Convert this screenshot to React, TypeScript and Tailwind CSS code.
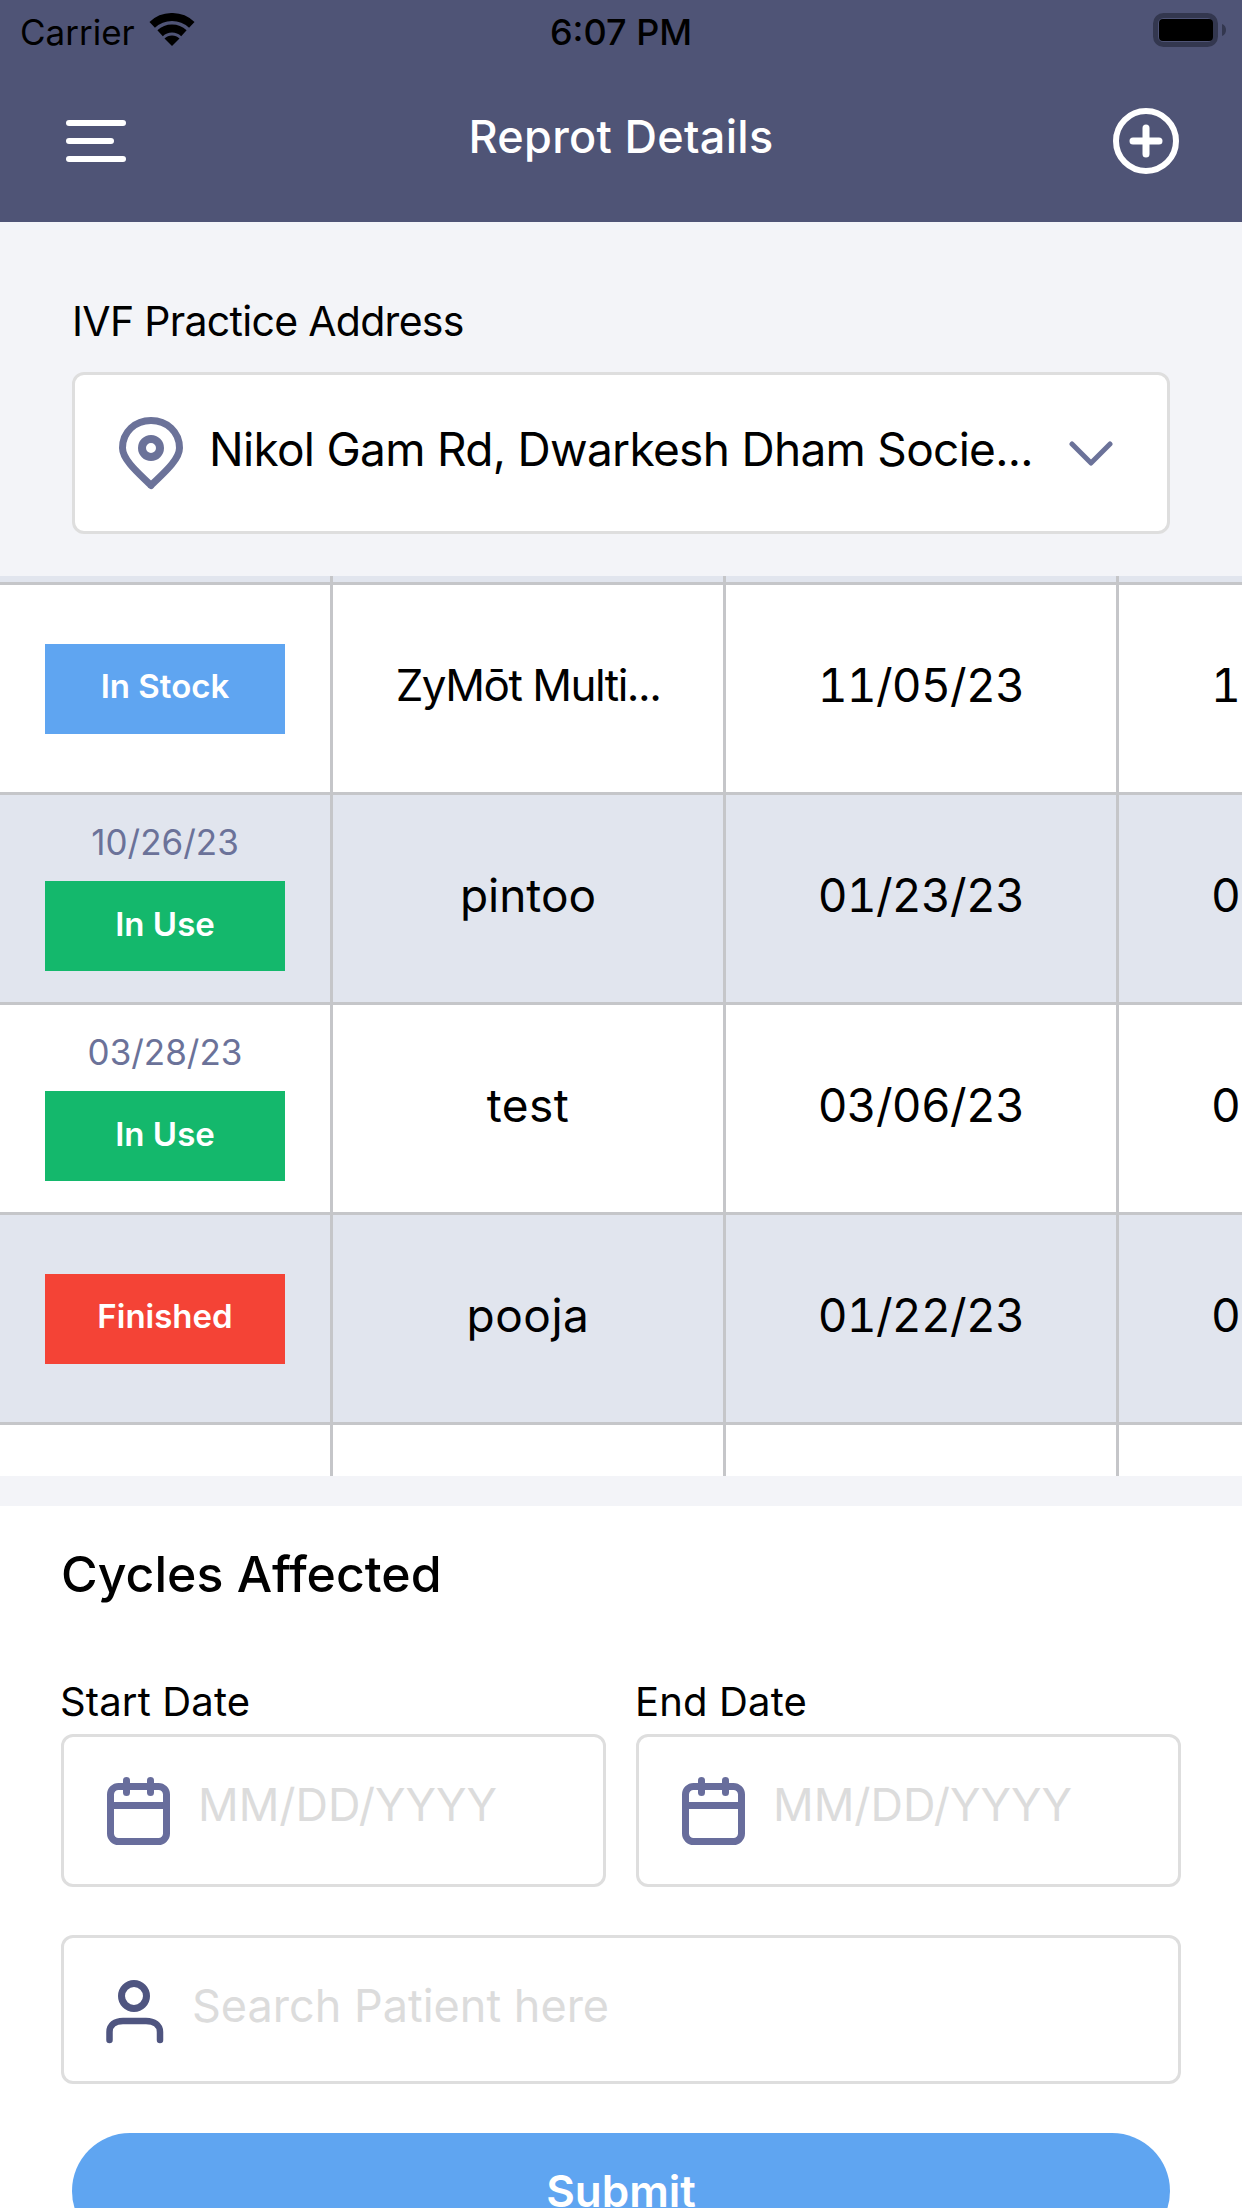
const F = "font-['Inter',sans-serif]";

function Wifi() {
  return (
    <svg width="46" height="34" viewBox="0 0 46 34" className="absolute left-[149px] top-[13px]">
      <path d="M3.200 11.800 A29 29 0 0 1 42.800 11.800" fill="none" stroke="#000" strokeWidth="8" />
      <path d="M11.100 20.200 A17.500 17.500 0 0 1 34.900 20.200" fill="none" stroke="#000" strokeWidth="8" />
      <path d="M23 33 L15.500 25.500 A10.600 10.600 0 0 1 30.500 25.500 Z" fill="#000" />
    </svg>
  );
}

function Battery() {
  return (
    <svg width="74" height="34" viewBox="0 0 74 34" className="absolute left-[1153px] top-[13px]">
      <rect x="2.500" y="2.500" width="60" height="29" rx="8" fill="none" stroke="#33374f" strokeWidth="5" />
      <rect x="6" y="6" width="54" height="22" rx="4" fill="#000" />
      <path d="M69 11 v12 c3 -1 4 -3.500 4 -6 s-1 -5 -4 -6z" fill="#33374f" />
    </svg>
  );
}

function Pin() {
  return (
    <svg width="64" height="73" viewBox="0 0 64 73" className="shrink-0">
      <path d="M32 68.500 C24 60 3.500 44 3.500 31 C3.500 15 16 3.500 32 3.500 C48 3.500 60.500 15 60.500 31 C60.500 44 40 60 32 68.500 Z" fill="none" stroke="#6b7299" strokeWidth="7" strokeLinejoin="round" />
      <circle cx="32" cy="31" r="9" fill="none" stroke="#6b7299" strokeWidth="8" />
    </svg>
  );
}

function Calendar() {
  return (
    <svg width="63" height="68" viewBox="0 0 63 68" className="shrink-0">
      <rect x="3.500" y="9.500" width="56" height="55" rx="8" fill="none" stroke="#686d9c" strokeWidth="7" />
      <rect x="3" y="25" width="57" height="7" fill="#686d9c" />
      <rect x="16" y="0" width="7" height="19" rx="3.500" fill="#686d9c" />
      <rect x="40" y="0" width="7" height="19" rx="3.500" fill="#686d9c" />
    </svg>
  );
}

function Person() {
  return (
    <svg width="58" height="64" viewBox="0 0 58 64" className="mt-[5px] shrink-0">
      <circle cx="28" cy="16" r="12.500" fill="none" stroke="#4f5580" strokeWidth="7" />
      <path d="M3.500 60 V52 C3.500 45 9 41 17 41 H40 C48 41 54 45 54 52 V60" fill="none" stroke="#4f5580" strokeWidth="6.500" strokeLinecap="round" />
    </svg>
  );
}

type Row = { date?: string; badge: string; color: string; name: string; nameClass: string; d1: string; d2: string; alt: boolean };
const rows: Row[] = [
  { badge: "In Stock", color: "bg-[#5fa5f1]", name: "ZyMōt Multi...", nameClass: "text-[44px] tracking-[-1.500px]", d1: "11/05/23", d2: "11/05/23", alt: false },
  { date: "10/26/23", badge: "In Use", color: "bg-[#14b86c]", name: "pintoo", nameClass: "text-[46px]", d1: "01/23/23", d2: "02/23/23", alt: true },
  { date: "03/28/23", badge: "In Use", color: "bg-[#14b86c]", name: "test", nameClass: "text-[46px] tracking-[0.500px]", d1: "03/06/23", d2: "03/23/23", alt: false },
  { badge: "Finished", color: "bg-[#f44336]", name: "pooja", nameClass: "text-[46px] tracking-[0.500px]", d1: "01/22/23", d2: "01/23/23", alt: true },
];

function Cell({ children, wide }: { children?: React.ReactNode; wide?: boolean }) {
  return (
    <div className={`flex shrink-0 flex-col items-center justify-center border-r-[3px] border-[#c5c6c9] ${wide ? "w-[333px]" : "w-[393px]"}`}>
      {children}
    </div>
  );
}

function TableRow({ r }: { r: Row }) {
  return (
    <div className={`flex h-[210px] border-b-[3px] border-[#c5c6c9] ${r.alt ? "bg-[#e1e5ee]" : "bg-white"}`}>
      <Cell wide>
        <div className="flex w-[240px] flex-col items-center">
          {r.date && (
            <div className="mb-[23px] text-[35px] leading-[32px] text-[#6b7299]">{r.date}</div>
          )}
          <div className={`flex h-[90px] w-[240px] items-center justify-center pb-[3px] text-[33px] font-semibold text-white ${r.color}`}>
            {r.badge}
          </div>
        </div>
      </Cell>
      <Cell>
        <div className={`-mt-[7px] whitespace-nowrap text-black ${r.nameClass}`}>{r.name}</div>
      </Cell>
      <Cell>
        <div className="-mt-[7px] whitespace-nowrap text-[46px] tracking-[-0.700px] text-black tabular-nums">{r.d1}</div>
      </Cell>
      <div className="-mt-[7px] flex shrink-0 items-center whitespace-nowrap pl-[92px] text-[46px] tracking-[-0.700px] text-black tabular-nums">{r.d2}</div>
    </div>
  );
}

function DateField({ label }: { label: string }) {
  return (
    <div className="flex w-[545px] flex-col">
      <div className="-ml-[1px] h-[36px] text-[40px] leading-[36px] tracking-[0.150px] text-black">{label}</div>
      <div className="mt-[14px] flex h-[153px] items-center gap-[28px] rounded-[12px] border-[3px] border-[#dedede] pl-[43px]">
        <Calendar />
        <div className="-mt-[12px] whitespace-nowrap text-[45px] text-[#dcdcdc]">MM/DD/YYYY</div>
      </div>
    </div>
  );
}

export default function App() {
  return (
    <div className={`relative flex h-[2208px] w-[1242px] flex-col overflow-hidden bg-[#f3f4f8] ${F}`}>
      <header className="relative h-[222px] shrink-0 bg-[#4f5476]">
        <div className="flex h-[60px] items-center justify-center pt-[3px]">
          <span className="absolute left-[20px] top-[12px] text-[35px] leading-[40px] text-black">Carrier</span>
          <span className="text-[36px] font-medium leading-[40px] text-black">6:07 PM</span>
        </div>
        <Wifi />
        <Battery />
        <div className="grid h-[162px] grid-cols-[1fr_auto_1fr] items-start px-[63px] pt-[48px]">
          <div className="ml-[3px] mt-[12px] flex w-[60px] flex-col gap-[12px]">
            <div className="h-[6px] w-[60px] rounded-full bg-white" />
            <div className="h-[6px] w-[48px] rounded-full bg-white" />
            <div className="h-[6px] w-[60px] rounded-full bg-white" />
          </div>
          <div className="mt-[4px] text-[45px] font-medium leading-[50px] tracking-[0.300px] text-white">Reprot Details</div>
          <svg width="66" height="66" viewBox="0 0 66 66" className="justify-self-end">
            <circle cx="33" cy="33" r="30" fill="none" stroke="#fff" strokeWidth="6" />
            <path d="M33 20 V46 M20 33 H46" stroke="#fff" strokeWidth="7" strokeLinecap="round" />
          </svg>
        </div>
      </header>

      <section className="shrink-0 px-[72px] pt-[75px]">
        <div className="h-[48px] text-[41px] leading-[48px] tracking-[-0.700px] text-black">IVF Practice Address</div>
        <div className="mt-[27px] flex h-[162px] w-[1098px] items-center rounded-[12px] border-[3px] border-[#dedede] bg-white pl-[44px]">
          <Pin />
          <div className="ml-[26px] -mt-[8px] w-[822px] whitespace-nowrap text-[46px] tracking-[-0.700px] text-black">Nikol Gam Rd, Dwarkesh Dham Socie...</div>
          <svg width="44" height="26" viewBox="0 0 44 26" className="ml-[38px] mt-[2px]">
            <path d="M3 3 L22 22 L41 3" fill="none" stroke="#6b7299" strokeWidth="5" strokeLinecap="round" strokeLinejoin="round" />
          </svg>
        </div>
      </section>

      <section className="mt-[42px] h-[900px] shrink-0 overflow-hidden">
        <div className="flex h-[9px] border-b-[3px] border-[#c5c6c9] bg-[#e1e5ee]">
          <Cell wide />
          <Cell />
          <Cell />
        </div>
        {rows.map((r) => (
          <TableRow key={r.name} r={r} />
        ))}
        <div className="flex h-[60px] bg-white">
          <Cell wide />
          <Cell />
          <Cell />
        </div>
      </section>

      <section className="mt-[30px] flex flex-1 flex-col bg-white px-[61px] pt-[43px]">
        <div className="h-[50px] shrink-0 text-[50px] font-medium leading-[50px] text-black">Cycles Affected</div>
        <div className="mt-[85px] flex shrink-0 justify-between">
          <DateField label="Start Date" />
          <DateField label="End Date" />
        </div>
        <div className="mt-[48px] flex h-[149px] shrink-0 items-center gap-[28px] rounded-[12px] border-[3px] border-[#dedede] pl-[42px]">
          <Person />
          <div className="-mt-[8px] whitespace-nowrap text-[45px] text-[#dcdcdc]">Search Patient here</div>
        </div>
        <div className="mx-[11px] mt-[49px] flex h-[116px] shrink-0 items-center justify-center rounded-full bg-[#5fa5f1] text-[44px] font-semibold text-white">
          Submit
        </div>
      </section>
    </div>
  );
}
